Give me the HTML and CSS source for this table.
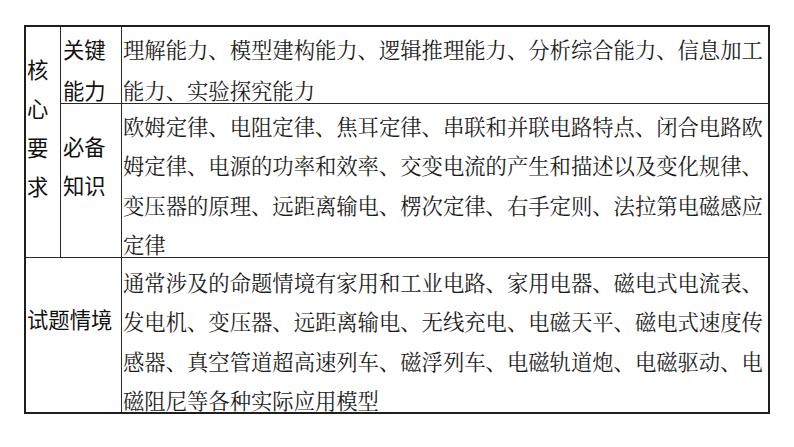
FILE: index.html
```html
<!DOCTYPE html>
<html lang="zh-CN">
<head>
<meta charset="utf-8">
<link rel="stylesheet" href="styles.css">
</head>
<body>
<div class="page">
  <div class="table">
    <div class="cell head core">核心要求</div>
    <div class="cell head key">关键能力</div>
    <div class="cell body r1">理解能力、模型建构能力、逻辑推理能力、分析综合能力、信息加工能力、实验探究能力</div>
    <div class="cell head must">必备知识</div>
    <div class="cell body r2">欧姆定律、电阻定律、焦耳定律、串联和并联电路特点、闭合电路欧姆定律、电源的功率和效率、交变电流的产生和描述以及变化规律、变压器的原理、远距离输电、楞次定律、右手定则、法拉第电磁感应定律</div>
    <div class="cell head scene">试题情境</div>
    <div class="cell body r3">通常涉及的命题情境有家用和工业电路、家用电器、磁电式电流表、发电机、变压器、远距离输电、无线充电、电磁天平、磁电式速度传感器、真空管道超高速列车、磁浮列车、电磁轨道炮、电磁驱动、电磁阻尼等各种实际应用模型</div>
  </div>
</div>
</body>
</html>
```

FILE: styles.css
```css
html, body {
  margin: 0;
  padding: 0;
  background: #ffffff;
}

.page {
  padding: 25px 0 0 24px;
}

.table {
  width: 742px;
  border: 2px solid #1e1e1e;
  display: grid;
  grid-template-columns: 34px 60px 646px;
  grid-template-rows: 76px 153px 154px;
  column-gap: 1px;
  row-gap: 1px;
  background: #2a2a2a;
  font-size: 21.33px;
  color: #161616;
}

.cell {
  background: #ffffff;
  overflow: visible;
  min-height: 0;
}

.head {
  font-family: "Noto Sans CJK SC", "Noto Sans", sans-serif;
  color: #111111;
}

.body {
  font-family: "AR PL UMing CN", "Noto Serif CJK SC", "Noto Sans CJK SC", serif;
  padding-left: 1px;
  color: #1c1c1c;
}

.core {
  grid-column: 1;
  grid-row: 1 / 3;
  line-height: 39px;
  padding: 22px 0 0 1px;
}

.key {
  grid-column: 2;
  grid-row: 1;
  line-height: 41px;
  padding: 1px 0 0 2px;
}

.r1 {
  grid-column: 3;
  grid-row: 1;
  line-height: 41px;
  padding-top: 1px;
}

.must {
  grid-column: 2;
  grid-row: 2;
  line-height: 39px;
  padding: 22px 0 0 2px;
}

.r2 {
  grid-column: 3;
  grid-row: 2;
  line-height: 39.3px;
  padding-top: 2px;
}

.scene {
  grid-column: 1 / 3;
  grid-row: 3;
  line-height: 40px;
  padding: 41px 0 0 1px;
}

.r3 {
  grid-column: 3;
  grid-row: 3;
  line-height: 39.3px;
  padding-top: 4px;
}
```
